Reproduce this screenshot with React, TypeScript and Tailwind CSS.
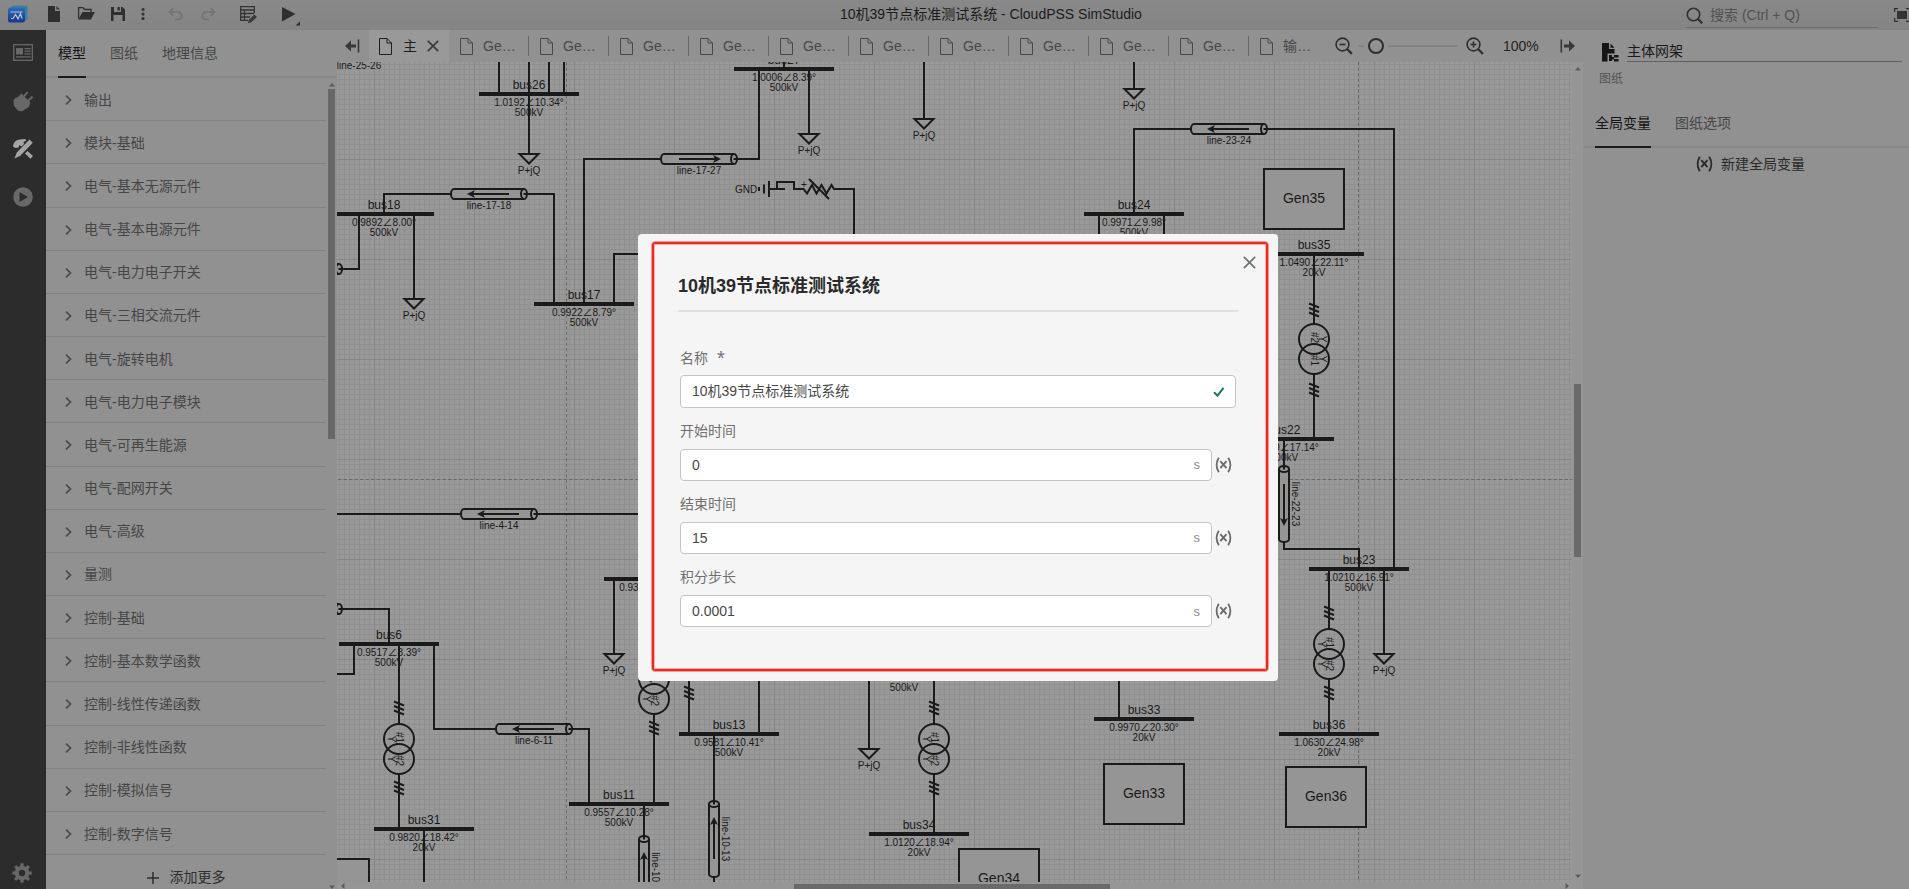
import React from "react";

const FONT = "font-['Liberation_Sans','Noto_Sans_CJK_SC',sans-serif]";
const INK = "#1a1a1a";

/* ---------- schematic symbols ---------- */

type BusProps = { x: number; y: number; name?: string; v?: string; kv?: string };

const Bus = ({ x, y, name, v, kv }: BusProps) => (
  <g>
    <rect x={x - 50} y={y - 2} width="100" height="4" fill={INK} />
    <g fill={INK} textAnchor="middle">
      {name && <text x={x} y={y - 5} fontSize="12">{name}</text>}
      {v && <text x={x} y={y + 12} fontSize="10">{v}</text>}
      {kv && <text x={x} y={y + 22} fontSize="10">{kv}</text>}
    </g>
  </g>
);

const Load = ({ x, y }: { x: number; y: number }) => (
  <g>
    <path d={`M${x - 9.5} ${y}H${x + 9.5}L${x} ${y + 9.5}Z`} fill="none" stroke={INK} strokeWidth="2" />
    <text x={x} y={y + 20} fontSize="10" textAnchor="middle" fill={INK}>P+jQ</text>
  </g>
);

type LineProps = { x: number; y: number; name: string; dir: "fwd" | "rev"; vertical?: boolean };

const TLine = ({ x, y, name, dir, vertical }: LineProps) => (
  <g>
    <g transform={`translate(${x} ${y})${vertical ? " rotate(-90)" : ""}`} fill="none" stroke={INK} strokeWidth="2">
      <path d="M-35 -5H35A3 5 0 0 1 35 5H-35A3 5 0 0 1 -35 -5Z" fill="#959595" />
      <path d="M35 -5A3 5 0 0 0 35 5" />
      <path d="M34.5 0H38" />
      <g transform={dir === "rev" ? "scale(-1 1)" : undefined}>
        <path d="M-20 0H18" />
        <path d="M22 0L14 -4L16 0L14 4Z" fill={INK} stroke="none" />
      </g>
    </g>
    {vertical ? (
      <text transform={`translate(${x + 8.4} ${y}) rotate(90)`} fontSize="10" textAnchor="middle" fill={INK}>{name}</text>
    ) : (
      <text x={x} y={y + 15} fontSize="10" textAnchor="middle" fill={INK}>{name}</text>
    )}
  </g>
);

const Slashes = ({ x, y }: { x: number; y: number }) => (
  <path
    d={`M${x - 5} ${y - 6.5}l10 4M${x - 5} ${y - 2}l10 4M${x - 5} ${y + 2.5}l10 4`}
    stroke={INK}
    strokeWidth="2"
    fill="none"
  />
);

const Transformer = ({ x, y, flip }: { x: number; y: number; flip?: boolean }) => (
  <g>
    <g fill="none" stroke={INK} strokeWidth="2">
      <circle cx={x} cy={y - 10} r="15" />
      <circle cx={x} cy={y + 10} r="15" />
    </g>
    <Slashes x={x} y={y - (flip ? 39 : 41)} />
    <Slashes x={x} y={y + (flip ? 41 : 39)} />
    <g fontSize="10" textAnchor="middle" fill={INK}>
      <text transform={`translate(${x - 3} ${y - 11.5}) rotate(90)`}>{flip ? "#2" : "#1"}</text>
      <text transform={`translate(${x - 3} ${y + 11.5}) rotate(90)`}>{flip ? "#1" : "#2"}</text>
      <text transform={`translate(${x + (flip ? 5 : -11)} ${y - 10}) rotate(90)`}>Y</text>
      <text transform={`translate(${x + (flip ? 5 : -11)} ${y + 10}) rotate(90)`}>Y</text>
    </g>
  </g>
);

const Gen = ({ x, y, name }: { x: number; y: number; name: string }) => (
  <g>
    <rect x={x} y={y} width="80" height="60" fill="#959595" stroke={INK} strokeWidth="2" />
    <text x={x + 40} y={y + 34} fontSize="14" textAnchor="middle" fill={INK}>{name}</text>
  </g>
);

const WIRES = [
  "M499 62V94", "M529 62V154", "M549 62V94", "M564 62V94",
  "M384 214V194H451", "M527 194H554V304", "M584 304V159H661", "M737 159H759V69",
  "M784 62V69", "M809 69V134", "M924 62V119", "M1134 62V89",
  "M359 214V269H342", "M414 214V299", "M614 304V254H660",
  "M1134 214V129H1191", "M1267 129H1394V569", "M1099 214V260", "M1164 214V260",
  "M1314 254V324", "M1314 374V439", "M1284 439V469", "M1284 542V549H1359V569",
  "M1329 569V629", "M1329 679V734", "M1384 569V654",
  "M337 514H461", "M537 514H660", "M614 579V654",
  "M342 609H389V644", "M354 644V674H337", "M399 644V724", "M399 774V829",
  "M434 644V729H496", "M572 729H589V804", "M424 829V882", "M654 714V804",
  "M644 804V839", "M714 734V804", "M714 877V882", "M689 670V734", "M759 670V734",
  "M869 670V749", "M934 670V724", "M934 774V834", "M1119 670V719",
];

const Schematic = () => (
  <svg width="1235" height="820" viewBox="337 62 1235 820" className="block shrink-0">
    <defs>
      <pattern id="minor" x="374" y="159" width="5" height="5" patternUnits="userSpaceOnUse">
        <path d="M0 .5H5M.5 0V5" stroke="#909090" strokeWidth="1" />
      </pattern>
      <pattern id="major" x="374" y="159" width="100" height="100" patternUnits="userSpaceOnUse">
        <path d="M0 .5H100M.5 0V100" stroke="#868686" strokeWidth="1" />
      </pattern>
    </defs>
    <rect x="337" y="62" width="1235" height="820" fill="#999999" />
    <rect x="337" y="62" width="1235" height="820" fill="url(#minor)" />
    <rect x="337" y="62" width="1235" height="820" fill="url(#major)" />
    <path d="M566.5 62V882M1358.5 62V882M338 479.5H1572" stroke="#6a6a6a" strokeDasharray="3.5 2" fill="none" />

    <path d={WIRES.join("")} stroke={INK} strokeWidth="2" fill="none" />

    <text x="359" y="69" fontSize="10" textAnchor="middle" fill={INK}>line-25-26</text>
    <TLine x={304} y={269} name="" dir="rev" />
    <TLine x={304} y={609} name="" dir="rev" />
    <TLine x={489} y={194} name="line-17-18" dir="rev" />
    <TLine x={699} y={159} name="line-17-27" dir="fwd" />
    <TLine x={1229} y={129} name="line-23-24" dir="rev" />
    <TLine x={499} y={514} name="line-4-14" dir="rev" />
    <TLine x={534} y={729} name="line-6-11" dir="rev" />
    <TLine x={714} y={839} name="line-10-13" dir="fwd" vertical />
    <TLine x={644} y={874} name="line-10-11" dir="fwd" vertical />
    <TLine x={1284} y={504} name="line-22-23" dir="rev" vertical />

    <Bus x={529} y={94} name="bus26" v="1.0192∠10.34°" kv="500kV" />
    <Bus x={384} y={214} name="bus18" v="0.9892∠8.00°" kv="500kV" />
    <Bus x={584} y={304} name="bus17" v="0.9922∠8.79°" kv="500kV" />
    <Bus x={784} y={69} name="bus27" v="1.0006∠8.39°" kv="500kV" />
    <Bus x={1134} y={214} name="bus24" v="0.9971∠9.98°" kv="500kV" />
    <Bus x={1314} y={254} name="bus35" v="1.0490∠22.11°" kv="20kV" />
    <Bus x={1284} y={439} name="bus22" v="1.0489∠17.14°" kv="500kV" />
    <Bus x={1359} y={569} name="bus23" v="1.0210∠16.91°" kv="500kV" />
    <Bus x={654} y={579} v="0.9380∠10.00°" />
    <Bus x={389} y={644} name="bus6" v="0.9517∠8.39°" kv="500kV" />
    <Bus x={424} y={829} name="bus31" v="0.9820∠18.42°" kv="20kV" />
    <Bus x={619} y={804} name="bus11" v="0.9557∠10.28°" kv="500kV" />
    <Bus x={729} y={734} name="bus13" v="0.9581∠10.41°" kv="500kV" />
    <Bus x={919} y={834} name="bus34" v="1.0120∠18.94°" kv="20kV" />
    <Bus x={1144} y={719} name="bus33" v="0.9970∠20.30°" kv="20kV" />
    <Bus x={1329} y={734} name="bus36" v="1.0630∠24.98°" kv="20kV" />
    <Bus x={904} y={669} kv="500kV" />

    <Load x={529} y={154} />
    <Load x={414} y={299} />
    <Load x={809} y={134} />
    <Load x={924} y={119} />
    <Load x={1134} y={89} />
    <Load x={614} y={654} />
    <Load x={869} y={749} />
    <Load x={1384} y={654} />

    <Transformer x={1314} y={349} flip />
    <Transformer x={399} y={749} />
    <Transformer x={654} y={689} />
    <Transformer x={934} y={749} />
    <Transformer x={1329} y={654} />
    <Slashes x={689} y={693} />

    <Gen x={1264} y={169} name="Gen35" />
    <Gen x={1104} y={764} name="Gen33" />
    <Gen x={1286} y={767} name="Gen36" />
    <Gen x={959} y={849} name="Gen34" />
    <Gen x={289} y={859} name="" />

    <g stroke={INK} fill="none" strokeWidth="2">
      <path d="M759 187V191M764 184.5V193.5M769 181V197M769 189H785M777 190V182H794V189H803.5L807 193.5L812 185L816.5 193.5L821.5 185L826.5 193.5L831.5 185L834 189H854V260M809 179L829 199" />
    </g>
    <g fill={INK} fontSize="10" textAnchor="middle">
      <text x="746" y="193">GND</text>
      <text x="804" y="188">+</text>
    </g>
  </svg>
);

/* ---------- small icons ---------- */

const FileOutline = () => (
  <svg width="13" height="17" viewBox="0 0 13 17" fill="none" stroke="currentColor" strokeWidth="1" className="shrink-0">
    <path d="M.5 .5H8L12.500 5V16.500H.5ZM8 .5V5H12.500" />
  </svg>
);

const Cross = ({ size, w }: { size: number; w: number }) => (
  <svg width={size} height={size} viewBox="0 0 12 12" stroke="currentColor" strokeWidth={w} className="shrink-0">
    <path d="M.8 .8L11.200 11.200M11.200 .8L.8 11.200" />
  </svg>
);

const Chevron = () => (
  <svg width="7" height="10" viewBox="0 0 7 10" fill="none" stroke="#4a4a4a" strokeWidth="1.700">
    <path d="M1 .6L5.500 5L1 9.400" />
  </svg>
);

const VarIcon = ({ className }: { className: string }) => (
  <svg width="17" height="16" viewBox="0 0 17 16" fill="none" stroke="currentColor" className={className}>
    <path d="M3.800 .8Q-.6 8 3.800 15.200M13.200 .8Q17.600 8 13.200 15.200" strokeWidth="1.800" />
    <path d="M5.300 4.200L11.500 11.200M11.500 4.200L5.300 11.200" strokeWidth="1.900" />
  </svg>
);

const ZoomIcon = ({ plus }: { plus?: boolean }) => (
  <svg width="18" height="18" viewBox="0 0 18 18" fill="none" stroke="#2e2e2e" className="shrink-0">
    <circle cx="7.500" cy="7.500" r="6.400" strokeWidth="1.600" />
    <path d="M12 12L16.900 16.900" strokeWidth="2.200" />
    <path d={plus ? "M4.500 7.500H10.500M7.500 4.500V10.500" : "M4.500 7.500H10.500"} strokeWidth="1.600" />
  </svg>
);

const Caret = ({ className }: { className: string }) => (
  <svg width="6" height="4" viewBox="0 0 6 4" className={className} fill="#5c5c5c"><path d="M3 0L6 3.500H0Z" /></svg>
);

const GROUPS = [
  "输出", "模块-基础", "电气-基本无源元件", "电气-基本电源元件", "电气-电力电子开关", "电气-三相交流元件",
  "电气-旋转电机", "电气-电力电子模块", "电气-可再生能源", "电气-配网开关", "电气-高级", "量测",
  "控制-基础", "控制-基本数学函数", "控制-线性传递函数", "控制-非线性函数", "控制-模拟信号", "控制-数字信号",
];

const SHEETS = ["Ge…", "Ge…", "Ge…", "Ge…", "Ge…", "Ge…", "Ge…", "Ge…", "Ge…", "Ge…", "输…"];

/* ---------- page regions ---------- */

const TitleBar = () => (
  <header className="relative flex h-[30px] shrink-0 items-center overflow-hidden bg-linear-to-b from-[#898989] to-[#848484] text-[#2b2b2b]">
    <svg width="310" height="30" viewBox="0 0 310 30" className="shrink-0">
      <defs>
        <linearGradient id="lg" x1="0" y1="0" x2="0" y2="1">
          <stop offset="0" stopColor="#2d6bb8" />
          <stop offset="1" stopColor="#1a3590" />
        </linearGradient>
      </defs>
      <rect x="11.500" y="5.500" width="16" height="15" rx="2" fill="#3a7fa6" />
      <rect x="8" y="7.500" width="17" height="15" rx="2" fill="url(#lg)" />
      <path d="M10.500 12H22.500M11 18.500H13L15.500 14.500L18 19L20.500 13.500L22 18.500" stroke="#b9c4d6" strokeWidth="1.200" fill="none" />
      <path d="M48 6H55V11H60V22H48ZM56.500 6L60 9.500H56.500Z" fill="#2f2f2f" />
      <path d="M78.600 18.500V7.700H83L84.500 9.500H91V12" fill="none" stroke="#2f2f2f" strokeWidth="1.300" />
      <path d="M78.300 19.600L82.500 12H94.800L91 19.600Z" fill="#2f2f2f" />
      <path d="M111 7H122.500L125 9.500V21H111ZM114 7V12H121V7ZM113.500 15V21H122.500V15Z" fill="#2f2f2f" fillRule="evenodd" />
      <path d="M117.500 7H119.800V10.500H117.500Z" fill="#2f2f2f" />
      <g fill="#333"><circle cx="143" cy="9.500" r="1.600" /><circle cx="143" cy="14" r="1.600" /><circle cx="143" cy="18.500" r="1.600" /></g>
      <g fill="none" stroke="#727272" strokeWidth="1.700">
        <path d="M170 12H178.500A3.800 3.800 0 0 1 178.500 19.500H175M173.500 8L169.500 12L173.500 16" />
        <path d="M214 12H205.500A3.800 3.800 0 0 0 205.500 19.500H209M210.500 8L214.500 12L210.500 16" />
      </g>
      <path d="M248 20.300H240.700V6.700H254.300V13M240.700 10H254.300M240.700 13.500H254M240.700 17H250M244.500 10V20.500" fill="none" stroke="#333" strokeWidth="1.300" />
      <path d="M254.500 14.500L257 17L251 22.500L248 23L248.500 20Z" fill="#3a3a3a" />
      <path d="M282 7L295.500 14L282 21.500Z" fill="#2f2f2f" />
      <path d="M300 21.500V25.500H295.500Z" fill="#2f2f2f" />
    </svg>
    <div className="-mt-[2px] flex-1 pl-[530px] text-[14px] leading-[28px] whitespace-nowrap text-[#1c1c1c]">
      10机39节点标准测试系统 - CloudPSS SimStudio
    </div>
    <div className="mt-[1px] mr-[16px] flex h-[24px] w-[192px] items-center gap-[7px] border-b border-[#6c6c6c] text-[14px] text-[#525252]">
      <svg width="17" height="17" viewBox="0 0 17 17" fill="none" stroke="#2f2f2f" strokeWidth="1.600">
        <circle cx="7.500" cy="7.500" r="6.200" /><path d="M12 12L16.300 16.300" strokeWidth="2.200" />
      </svg>
      <span>搜索 (Ctrl + Q)</span>
    </div>
    <svg width="15" height="14" viewBox="0 0 15 14" className="shrink-0">
      <path d="M4 .6H.6V4M.6 10V13.400H4M12 .6H15M12 13.400H15" stroke="#2f2f2f" strokeWidth="1.200" fill="none" />
      <rect x="3" y="3" width="10" height="8" fill="#333" />
    </svg>
  </header>
);

const Rail = () => (
  <nav className="flex w-[46px] shrink-0 flex-col items-center bg-[#2c2c2c] pt-[14px] pb-[6px] text-[#686868]">
    <svg width="20" height="17" viewBox="0 0 20 17" fill="none" stroke="currentColor" strokeWidth="1.300">
      <rect x=".7" y=".7" width="18.600" height="15.600" />
      <rect x="3" y="4" width="7" height="6.500" fill="currentColor" stroke="none" />
      <path d="M11.500 4.700H17.500M11.500 7.200H17.500M11.500 9.800H17.500M3 12.800H17.500" />
    </svg>
    <svg width="20" height="21" viewBox="0 0 20 21" fill="currentColor" className="mt-[30px]">
      <path d="M8.500 2.500L17.500 11.500L16.500 14Q16 17 13 17.500L10.500 19.500Q6.500 21.500 3.500 18Q-.5 14.500 1 10.500L0 9.500L3 6.500Q5 6.500 6 5Z" />
      <path d="M11 5.500L14.500 1M15 10L19.500 5.500" stroke="currentColor" strokeWidth="2" />
    </svg>
    <svg width="20" height="20" viewBox="0 0 20 20" fill="#a5a5a5" className="mt-[27px]">
      <path d="M16.500 .5L19.800 3.800L7 17L1.500 19.500L3.800 13.500Z" />
      <path d="M0 7.500Q.5 1.500 6.500 .5L12 0L13.500 1.500L10.500 3L11 5L8.500 7.500L6.500 6L5.500 8.500L2.500 9ZM12 14.500L14.500 12L20 17L17.500 19.800Z" />
    </svg>
    <svg width="20" height="20" viewBox="0 0 20 20" className="mt-[28px]">
      <circle cx="10" cy="10" r="9.800" fill="currentColor" /><path d="M6.500 5L15 10L6.500 15Z" fill="#2c2c2c" />
    </svg>
    <svg width="20" height="20" viewBox="-10 -10 20 20" className="mt-auto -ml-[2px]" fill="currentColor">
      <circle r="7.300" />
      {[0, 45, 90, 135].map((a) => (
        <rect key={a} x="-1.600" y="-9.700" width="3.200" height="19.400" transform={`rotate(${a})`} />
      ))}
      <circle r="3.200" fill="#2c2c2c" />
    </svg>
  </nav>
);

const ModelPanel = () => (
  <aside className="flex w-[291px] shrink-0 flex-col bg-[#919191] text-[14px] text-[#464646]">
    <div className="flex h-[48px] shrink-0 gap-[24px] border-b-2 border-[#888888] pl-[12px]">
      <span className="-mb-[2px] h-[48px] border-b-2 border-[#1a1a1a] leading-[46px] text-[#151515]">模型</span>
      <span className="leading-[46px]">图纸</span>
      <span className="leading-[46px]">地理信息</span>
    </div>
    <div className="flex min-h-0 flex-1">
      <div className="w-[280px] overflow-hidden">
        {GROUPS.map((g) => (
          <div key={g} className="flex h-[43.180px] items-center gap-[12px] border-b border-[#818181] pt-[2px] pl-[19px]">
            <Chevron />
            <span>{g}</span>
          </div>
        ))}
        <div className="flex h-[43px] items-center justify-center gap-[11px] pt-[2px] text-[#2e2e2e]">
          <svg width="12" height="12" viewBox="0 0 12 12" stroke="#2e2e2e" strokeWidth="1.500"><path d="M6 0V12M0 6H12" /></svg>
          <span>添加更多</span>
        </div>
      </div>
      <div className="ml-[2px] flex w-[7px] flex-col items-center justify-between pt-[5px]">
        <div className="flex flex-col items-center gap-[2px]">
          <Caret className="" />
          <div className="h-[350px] w-[7px] bg-[#686868]" />
        </div>
        <Caret className="rotate-180" />
      </div>
    </div>
  </aside>
);

const SheetTabs = () => (
  <div className="flex h-[32px] shrink-0 items-center bg-[#919191] text-[14px] text-[#484848]">
    <svg width="15" height="14" viewBox="0 0 15 14" className="mr-[9px] ml-[8px] shrink-0" fill="#383838">
      <path d="M0 7L6 1.500V5.500H11V8.500H6V12.500ZM12.700 .5H14.300V13.500H12.700Z" />
    </svg>
    <div className="flex h-full w-[80px] items-center bg-[#999999] pl-[10px] text-[#1f1f1f]">
      <FileOutline />
      <span className="ml-[11px] w-[14px]">主</span>
      <span className="ml-[10px] flex text-[#3c3c3c]"><Cross size={12} w={1.7} /></span>
    </div>
    {SHEETS.map((s, i) => (
      <div key={i} className="flex h-full w-[80px] items-center">
        <div className={"flex h-[20px] w-full items-center pl-[11px] " + (i < 10 ? "border-r border-[#666666]" : "")}>
          <FileOutline />
          <span className="ml-[10px] whitespace-nowrap">{s}</span>
        </div>
      </div>
    ))}
    <div className="ml-[6px] flex items-center">
      <ZoomIcon />
      <div className="ml-[5px] h-[2px] w-[6px] bg-[#838383]" />
      <div className="ml-[4px] h-[16px] w-[16px] shrink-0 rounded-full border-2 border-[#2e2e2e]" />
      <div className="ml-[4px] h-[2px] w-[70px] bg-[#838383]" />
      <div className="ml-[8px] flex"><ZoomIcon plus /></div>
      <span className="ml-[19px] text-[#242424]">100%</span>
    </div>
    <svg width="15" height="14" viewBox="0 0 15 14" className="ml-[21px] shrink-0" fill="#383838">
      <path d="M15 7L9 1.500V5.500H4V8.500H9V12.500ZM.5 .5H2.100V13.500H.5Z" />
    </svg>
  </div>
);

const Workspace = () => (
  <main className="flex w-[1246px] shrink-0 flex-col bg-[#969696]">
    <SheetTabs />
    <div className="flex">
      <Schematic />
      <div className="flex h-[820px] w-[11px] flex-col items-center pt-[5px] pb-[4px]">
        <Caret className="" />
        <div className="mt-[313px] h-[173px] w-[7px] bg-[#6a6a6a]" />
        <Caret className="mt-auto rotate-180" />
      </div>
    </div>
    <div className="flex h-[7px] items-end">
      <Caret className="mb-[1px] ml-[3px] -rotate-90" />
      <div className="ml-[448px] h-[5px] w-[316px] bg-[#6a6a6a]" />
      <Caret className="mb-[1px] ml-[454px] rotate-90" />
    </div>
  </main>
);

const PropertyPanel = () => (
  <aside className="flex flex-1 flex-col bg-[#919191] text-[14px] text-[#464646]">
    <div className="flex h-[32px] items-end pr-[7px] pl-[18px]">
      <svg width="18" height="19" viewBox="0 0 18 19" fill="#151515" className="mr-[8px] mb-0 shrink-0">
        <path d="M1 0H8V6H13.500V10.500H6.500V18.500H1ZM9.500 .5L13.500 4.700H9.500Z" />
        <path d="M8 12H11V18H8ZM11 14.500H14M13 12H17.500V14.500H13ZM13 16H17.500V18.500H13ZM11 14H13V16.500H11Z" />
      </svg>
      <div className="h-[21px] flex-1 border-b border-[#5f5f5f] leading-[20px] text-[#1a1a1a]">主体网架</div>
    </div>
    <div className="pt-[8px] pl-[16px] text-[12px] leading-[18px] text-[#555]">图纸</div>
    <div className="mt-[12px] flex h-[48px] shrink-0 gap-[24px] border-b-2 border-[#888888] pl-[12px]">
      <span className="-mb-[2px] h-[48px] border-b-2 border-[#1a1a1a] leading-[46px] text-[#151515]">全局变量</span>
      <span className="leading-[46px]">图纸选项</span>
    </div>
    <div className="mt-[5px] flex h-[22px] items-center gap-[8px] pl-[113px] text-[#2a2a2a]">
      <VarIcon className="" />
      <span>新建全局变量</span>
    </div>
  </aside>
);

const NumberField = ({ label, value }: { label: string; value: string }) => (
  <div className="h-[73.200px]">
    <div className="h-[30px] leading-[25px]">{label}</div>
    <div className="flex items-center gap-[4px]">
      <div className="flex h-[32px] w-[532px] items-center justify-between rounded-[4px] border border-[#c4c4c4] bg-white pr-[11px] pl-[11px] text-[#484848]">
        <span>{value}</span>
        <span className="text-[13px] text-[#8a8a8a]">s</span>
      </div>
      <VarIcon className="-ml-[1px] text-[#6b6b6b]" />
    </div>
  </div>
);

const SettingsDialog = () => (
  <section className="absolute top-[234px] left-[638px] h-[447px] w-[640px] rounded-[4px] bg-[#f5f5f5] pt-[7px] pr-[9px] pb-[9px] pl-[13px] text-[14px] text-[#707070]">
    <div className="h-[431px] rounded-[4px] border border-[#fb9a94]">
      <div className="h-full rounded-[3px] border-2 border-[#e82a20]">
        <div className="h-full rounded-[1px] border border-[#fbb0aa] pr-[27px] pl-[23px]">
          <div className="-mr-[18px] flex h-[34px] items-center justify-end"><Cross size={13} w={1.6} /></div>
          <h1 className="h-[33px] border-b-2 border-[#e0e0e0] text-[18px] leading-[15px] font-bold text-[#2a2a2a]">10机39节点标准测试系统</h1>
          <div className="mt-[33px] pl-[2px]">
            <div className="flex h-[30px] items-start leading-[26px]">
              <span>名称</span>
              <span className="ml-[9px] text-[20px] leading-[27px]">*</span>
            </div>
            <div className="flex h-[33px] w-[556px] items-center justify-between rounded-[4px] border border-[#c4c4c4] bg-white pr-[10px] pl-[11px] text-[#484848]">
              <span>10机39节点标准测试系统</span>
              <svg width="12" height="10" viewBox="0 0 12 10" fill="none" stroke="#1b7a54" strokeWidth="2"><path d="M1 5.300L4.500 8.700L10.500 .8" /></svg>
            </div>
            <div className="mt-[11px]">
              <NumberField label="开始时间" value="0" />
              <NumberField label="结束时间" value="15" />
              <NumberField label="积分步长" value="0.0001" />
            </div>
          </div>
        </div>
      </div>
    </div>
  </section>
);

export default function App() {
  return (
    <div className={"relative flex h-[889px] w-[1909px] flex-col overflow-hidden " + FONT}>
      <TitleBar />
      <div className="flex h-[859px] shrink-0">
        <Rail />
        <ModelPanel />
        <Workspace />
        <PropertyPanel />
      </div>
      <SettingsDialog />
    </div>
  );
}
